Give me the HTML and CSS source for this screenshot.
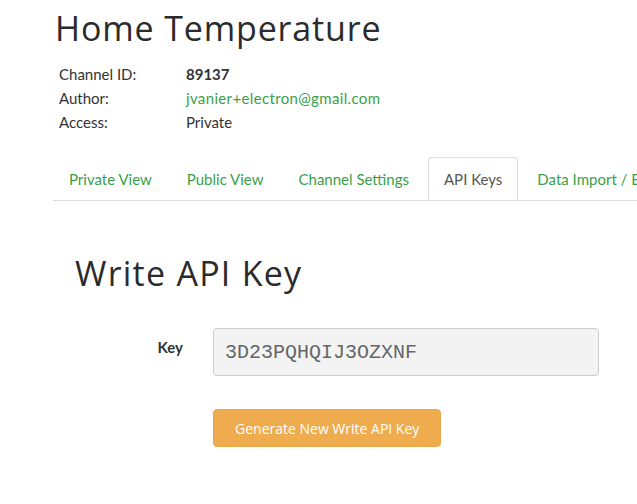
FILE: index.html
```html
<!DOCTYPE html>
<html>
<head><meta charset="utf-8"><title>Home Temperature</title>
<link rel="stylesheet" href="styles.css">
</head>
<body>
 <div class="page">
  <h1 class="title">Home Temperature</h1>
  <div class="info">
   <div class="row"><span class="lbl">Channel ID:</span><b>89137</b></div>
   <div class="row"><span class="lbl">Author:</span><a href="#" class="mail">jvanier+electron@gmail.com</a></div>
   <div class="row"><span class="lbl">Access:</span><span>Private</span></div>
  </div>

  <ul class="tabs">
   <li><a href="#">Private View</a></li>
   <li><a href="#">Public View</a></li>
   <li><a href="#">Channel Settings</a></li>
   <li class="active"><a href="#">API Keys</a></li>
   <li><a href="#">Data Import / Export</a></li>
  </ul>

  <div class="pane">
   <h2 class="sub">Write API Key</h2>
   <div class="field">
    <label class="key">Key</label>
    <input class="keybox" type="text" value="3D23PQHQIJ3OZXNF" readonly>
   </div>
   <div class="actions">
    <button class="btn">Generate New Write API Key</button>
   </div>
  </div>
 </div>
</body>
</html>
```

FILE: styles.css
```css
html{font-family:"Lato","Liberation Sans",sans-serif;color:#333}
body{margin:0;padding:0;overflow:hidden;background:#fff}
a{color:#3a9f4a;text-decoration:none}
.page{padding:0 0 0 55px}
.title{margin:0;padding-top:7px;font-family:"Open Sans",sans-serif;font-weight:400;font-size:34px;letter-spacing:.85px;line-height:42px;color:#2b2b2b}
.info{margin:13px 0 0 4px;font-size:15px;line-height:24px}
.row{display:flex}
.lbl{width:127px}
.row b{font-weight:700}
.mail{letter-spacing:.35px}
.tabs{list-style:none;margin:23px 0 0 -2px;padding:0;display:flex;white-space:nowrap;overflow:hidden;border-bottom:1px solid #ddd;font-size:15px}
.tabs li{margin-right:3px;margin-bottom:-1px}
.tabs a{display:block;padding:10px 15px;line-height:22px;border:1px solid transparent;border-radius:4px 4px 0 0}
.tabs .active a{color:#555;background:#fff;border-color:#ddd;border-bottom-color:transparent}
.pane{padding-top:48px}
.sub{margin:0 0 0 20px;font-family:"Open Sans",sans-serif;font-weight:400;font-size:34px;letter-spacing:1.25px;line-height:48px;color:#2b2b2b}
.field{display:flex;align-items:center;margin-top:31px}
.key{width:158px;box-sizing:border-box;padding:0 30px 10px 0;text-align:right;font-weight:700;font-size:15px}
.keybox{width:386px;height:48px;box-sizing:border-box;padding:0 11px;border:1px solid #ccc;border-radius:4px;background:#f3f3f3;font-family:"Liberation Mono",monospace;font-size:20px;color:#666;outline:0}
.actions{margin:33px 0 0 158px}
.btn{height:38px;padding:0 21px;border:1px solid #eba84a;border-radius:4px;background:#efac4e;color:#fff;font-family:"Open Sans",sans-serif;font-size:14px}
```
